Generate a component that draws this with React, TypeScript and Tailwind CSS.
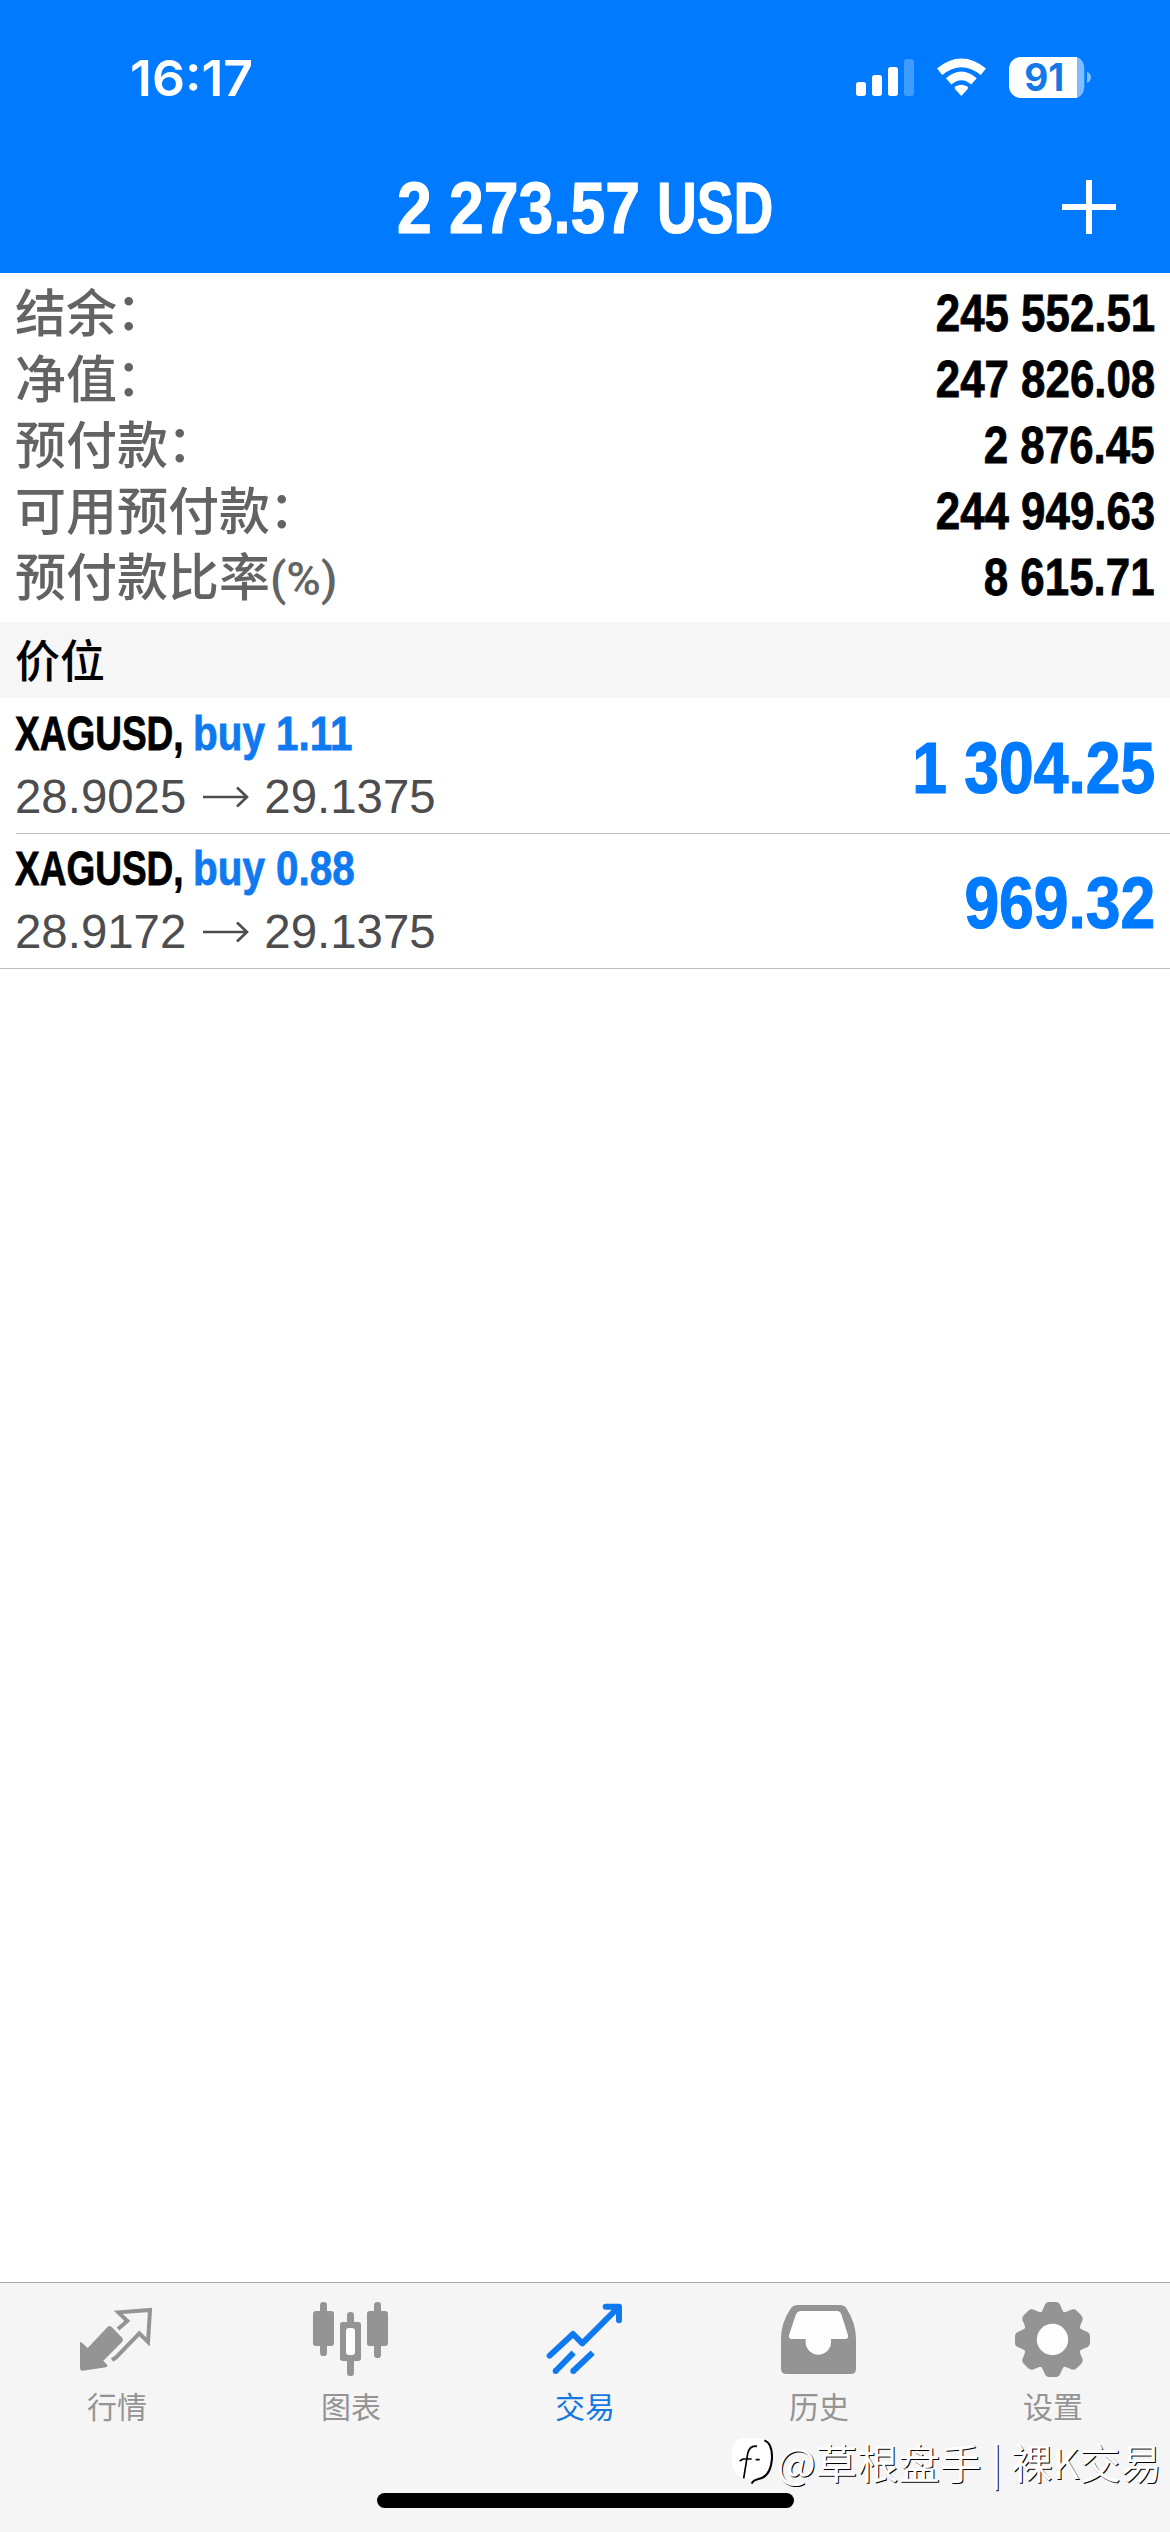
import type { ReactNode } from "react";

const summary = [
  { label: "结余", suffix: "：", value: "245 552.51" },
  { label: "净值", suffix: "：", value: "247 826.08" },
  { label: "预付款", suffix: "：", value: "2 876.45" },
  { label: "可用预付款", suffix: "：", value: "244 949.63" },
  { label: "预付款比率", suffix: "(%)", value: "8 615.71" },
];

const positions = [
  { symbol: "XAGUSD,", side: "buy 1.11", from: "28.9025", to: "29.1375", profit: "1 304.25" },
  { symbol: "XAGUSD,", side: "buy 0.88", from: "28.9172", to: "29.1375", profit: "969.32" },
];

function StatusIcons() {
  return (
    <svg className="h-[60px] w-[250px]" viewBox="30 30 750 180">
      <g fill="#fff">
        <rect x="48" y="126" width="30" height="42" rx="8" />
        <rect x="96" y="105" width="30" height="63" rx="8" />
        <rect x="144" y="81" width="30" height="87" rx="8" />
        <rect x="192" y="57" width="30" height="111" rx="8" opacity="0.25" />
        <path d="M364 168 L345 147 Q341 142 347 139 Q364 130 381 139 Q387 142 383 147 Z" />
        <path d="M711 51 A32 36 0 0 1 733 87 V138 A32 36 0 0 1 711 174 Z" opacity="0.5" />
        <path d="M543 51 H711 V174 H543 A36 36 0 0 1 507 138 V87 A36 36 0 0 1 543 51 Z" />
        <path d="M741 95 Q753 100 753 112 Q753 124 741 129 Z" opacity="0.5" />
      </g>
      <path d="M326 124 Q364 91 402 124" fill="none" stroke="#fff" strokeWidth="25" />
      <path d="M299 95 Q364 42 430 95" fill="none" stroke="#fff" strokeWidth="25" />
      <text
        x="613"
        y="153"
        textAnchor="middle"
        fill="#1479e8"
        fontSize="113"
        className="font-['Inter',sans-serif] font-bold"
        textLength="120"
        lengthAdjust="spacingAndGlyphs"
      >
        91
      </text>
    </svg>
  );
}

function QuotesIcon() {
  return (
    <svg className="h-20 w-20" viewBox="231 114 240 240">
      <path
        d="M240 246 L246 248 L263 264 L322 202 Q328 195 335 201 L367 234 Q372 240 366 246 L310 302 L322 315 Q324 320 318 322 L248 332 Q240 333 240 325 Z"
        fill="#949494"
      />
      <path
        d="M354 207 L382 183 L355 157 L450 150 L444 246 L418 220 L348 292 L336 300"
        fill="none"
        stroke="#949494"
        strokeWidth="12"
      />
    </svg>
  );
}

function ChartIcon() {
  return (
    <svg className="h-20 w-20" viewBox="933 114 240 240" fill="#949494">
      <rect x="960" y="126" width="21" height="162" rx="10" />
      <rect x="939" y="153" width="63" height="105" rx="8" />
      <rect x="1041" y="156" width="21" height="192" rx="10" />
      <rect x="1020" y="186" width="63" height="117" rx="8" />
      <rect x="1038" y="204" width="27" height="81" rx="9" fill="#fdfdfd" />
      <rect x="1122" y="126" width="21" height="168" rx="10" />
      <rect x="1101" y="153" width="63" height="105" rx="8" />
    </svg>
  );
}

function TradeIcon() {
  return (
    <svg className="h-20 w-20" viewBox="285 114 240 240" fill="none" stroke="#0f7af0" strokeWidth="18">
      <path d="M299 287 L369 222 L397 250 L504 143" strokeLinecap="round" strokeLinejoin="round" />
      <path d="M467 140 H507 V181" strokeLinecap="round" strokeLinejoin="round" />
      <path d="M317 333 L371 278 M370 333 L428 278" />
      <path d="M317 333 h0.1 M370 333 h0.1" strokeLinecap="round" />
    </svg>
  );
}

function HistoryIcon() {
  return (
    <svg className="h-20 w-20" viewBox="237 114 240 240">
      <path
        d="M294 135 H420 Q434 135 440 146 Q468 190 468 236 V326 Q468 342 452 342 H260 Q243 342 243 326 V236 Q243 190 271 147 Q279 135 294 135 Z"
        fill="#949494"
      />
      <path
        d="M303 153 H411 Q420 153 424 163 L444 226 Q446 237 436 237 H393 V246 A38 38 0 0 1 317 246 V237 H275 Q265 237 267 226 L287 165 Q292 153 303 153 Z"
        fill="#fdfdfd"
      />
    </svg>
  );
}

function SettingsIcon() {
  return (
    <svg className="h-20 w-20" viewBox="939 114 240 240">
      <g fill="#949494">
        <circle cx="1057.500" cy="238.500" r="88" />
        {[0, 45, 90, 135, 180, 225, 270, 315].map((angle) => (
          <path
            key={angle}
            transform={`rotate(${angle} 1057.500 238.500)`}
            d="M1018 163 Q1029 152 1032 141 Q1036 126 1048 126 H1067 Q1079 126 1083 141 Q1086 152 1097 163 Z"
          />
        ))}
      </g>
      <circle cx="1057.500" cy="238.500" r="47" fill="#fdfdfd" />
    </svg>
  );
}

function Tab({ label, active, children }: { label: string; active?: boolean; children: ReactNode }) {
  return (
    <div className={`flex w-[234px] flex-col items-center ${active ? "text-[#1478e0]" : "text-[#949494]"}`}>
      {children}
      <span className="mt-[6px] text-[30px] leading-[42px]">{label}</span>
    </div>
  );
}

export default function App() {
  return (
    <div className="relative flex h-[2532px] w-[1170px] flex-col overflow-hidden bg-white font-['Liberation_Sans','Noto_Sans_CJK_SC',sans-serif]">
      <header className="flex h-[273px] shrink-0 flex-col bg-[#007aff] text-white">
        <div className="flex h-[160px] items-center justify-between pr-[70px] pl-[130px]">
          <span className="origin-left scale-x-[1.035] pb-[4px] font-['Inter',sans-serif] text-[50px] font-semibold">
            16:17
          </span>
          <StatusIcons />
        </div>
        <div className="grid h-[92px] grid-cols-[234px_1fr_234px] items-center">
          <span />
          <h1 className="flex justify-center gap-[17px] pt-[2px] text-[73px] leading-[92px] font-bold whitespace-nowrap [-webkit-text-stroke:1.2px_currentColor]">
            <span className="w-[243px]">
              <span className="inline-block origin-left scale-x-[0.855]">2 273.57</span>
            </span>
            <span className="w-[116px]">
              <span className="inline-block origin-left scale-x-[0.755]">USD</span>
            </span>
          </h1>
          <svg className="ml-[126px] h-[54px] w-[54px]" viewBox="0 0 54 54" fill="#fff">
            <rect x="0" y="24" width="54" height="6" />
            <rect x="24" y="0" width="6" height="54" />
          </svg>
        </div>
      </header>

      <section className="flex h-[349px] shrink-0 flex-col pt-[8px]">
        {summary.map((row) => (
          <div key={row.label} className="flex h-[66px] items-center justify-between px-[15px]">
            <span className="flex pt-[2px] text-[51px] leading-[66px] font-medium text-[#636363]">
              <span>{row.label}</span>
              {row.suffix === "：" ? (
                <span className="-translate-x-[1px] -translate-y-[2px]">{row.suffix}</span>
              ) : (
                <span className="font-['Roboto',sans-serif] text-[47px] font-medium">{row.suffix}</span>
              )}
            </span>
            <span className="origin-right scale-x-[0.86] text-[51px] leading-[66px] font-bold text-black [-webkit-text-stroke:0.8px_currentColor]">
              {row.value}
            </span>
          </div>
        ))}
      </section>

      <div className="flex h-[76px] shrink-0 items-center bg-[#f6f6f6] pl-[15px] font-['Noto_Sans_CJK_SC',sans-serif] text-[45px] leading-[72px] font-medium text-black">
        <span className="mb-[3px]">价位</span>
      </div>

      <main className="flex flex-1 flex-col">
        {positions.map((p, i) => (
          <div key={p.from}>
            <div className={`flex items-center justify-between px-[15px] ${i === 0 ? "h-[135px]" : "h-[134px]"}`}>
              <div className="flex flex-col">
                <div className="-mt-[2px] mb-[2px] flex text-[49px] leading-[62px] font-bold whitespace-nowrap [-webkit-text-stroke:0.8px_currentColor]">
                  <span className="w-[178px] text-black">
                    <span className="inline-block origin-left scale-x-[0.755]">{p.symbol}</span>
                  </span>
                  <span className="origin-left scale-x-[0.825] text-[#0f7af0]">{p.side}</span>
                </div>
                <div className="flex items-center text-[47.400px] leading-[62px] text-[#4d4d4f]">
                  <span>{p.from}</span>
                  <svg className="mr-[15px] ml-[17px] h-[22px] w-[46px]" viewBox="0 0 46 22" fill="none" stroke="currentColor" strokeWidth="2.600">
                    <path d="M0 11 H44 M34 1.500 L44 11 L34 20.500" />
                  </svg>
                  <span>{p.to}</span>
                </div>
              </div>
              <span className="origin-right scale-x-[0.855] pt-[4px] text-[73px] font-bold text-[#007aff] [-webkit-text-stroke:1.2px_currentColor]">
                {p.profit}
              </span>
            </div>
            <div className={i === 0 ? "ml-[16px] h-px bg-[#bdbdbf]" : "h-px bg-[#bdbdbf]"} />
          </div>
        ))}
      </main>

      <nav className="flex h-[250px] shrink-0 border-t border-[#a8a8a8] bg-[#f5f5f5] pt-[15px] font-['Noto_Sans_CJK_SC',sans-serif]">
        <Tab label="行情">
          <QuotesIcon />
        </Tab>
        <Tab label="图表">
          <ChartIcon />
        </Tab>
        <Tab label="交易" active>
          <TradeIcon />
        </Tab>
        <Tab label="历史">
          <HistoryIcon />
        </Tab>
        <Tab label="设置">
          <SettingsIcon />
        </Tab>
      </nav>

      <div className="absolute right-[8px] bottom-[41px] flex items-center">
        <svg className="mt-[-4px] h-[52px] w-[48px]" viewBox="80 550 144 156">
          <path d="M120 560 H170 Q208 562 208 610 Q208 670 165 684 L150 696 Q146 680 130 680 Q88 676 88 620 Q88 562 120 560 Z" fill="#fff" />
          <path
            d="M124 680 L136 606 Q142 580 164 584 M112 628 L122 622 H148 M160 624 H172"
            fill="none"
            stroke="#000"
            strokeWidth="5"
          />
          <path
            d="M186 566 Q210 574 209 620 Q205 676 168 682 Q152 686 148 696"
            fill="none"
            stroke="#000"
            strokeWidth="6"
          />
        </svg>
        <span className="mb-[4px] font-['Noto_Sans_CJK_SC',sans-serif] text-[41.400px] leading-[52px] whitespace-nowrap text-white [text-shadow:1px_1px_0_#000]">
          @草根盘手 | 裸K交易
        </span>
      </div>

      <div className="absolute bottom-[24px] left-[377px] h-[15px] w-[417px] rounded-full bg-black" />
    </div>
  );
}
